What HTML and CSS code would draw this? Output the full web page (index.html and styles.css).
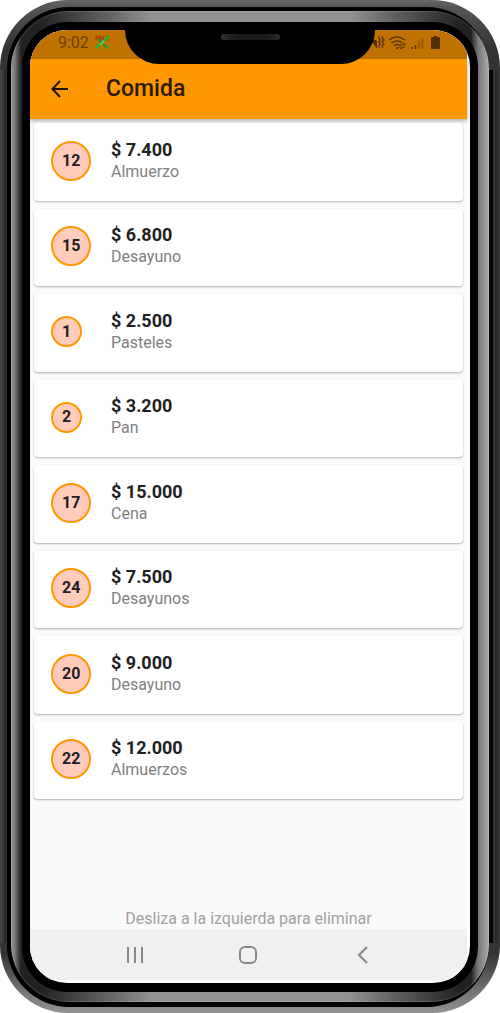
FILE: index.html
```html
<!DOCTYPE html>
<html lang="es">
<head>
<meta charset="utf-8">
<meta name="viewport" content="width=device-width, initial-scale=1">
<title>Comida</title>
<link rel="stylesheet" href="styles.css">
</head>
<body>
<div class="phone">
<div class="groove">
<div class="metal">
<div class="bezel">
<div class="glass">
<div class="notch"><span class="speaker"></span></div>
<div class="screen">
  <div class="status">
    <span class="clock">9:02</span>
    <svg class="gps" width="16" height="16" viewBox="0 0 16 16" aria-hidden="true">
      <path d="M1 1h2M1 1v4M1 3h2M4 5V1h2v4M4 3h2M8 1v4M10 1L8 3l2 2M14 1h-2v4h2" stroke="#a8321c" fill="none"/>
      <path d="M3 4l9 9" stroke="#189428" stroke-width="2"/>
      <path d="M1 13l4-4M9 6l5-5" stroke="#24b030" stroke-width="3"/>
      <path d="M5 10l4-4" stroke="#5fd060" stroke-width="2"/>
      <path d="M10 15q5 0 5-5M10 13q3 0 3-3" stroke="#6a9420" fill="none"/>
    </svg>
    <svg class="signals" width="72" height="16" viewBox="0 0 72 16" aria-hidden="true">
      <path d="M2 3l5 3v8L1 5z" fill="#4e2f00"/>
      <path d="M9.500 1l-1 2 2 2-2 2 2 2-2 2 1 2M13 1l-1 2 2 2-2 2 2 2-2 2 1 2" fill="none" stroke="#5c3800" stroke-width="1.300"/>
      <path d="M19 5q8-6 16 0M21.500 8q5.500-4 11 0M24 10.500q3-2 6 0" fill="none" stroke="#5c3800" stroke-width="1.500"/>
      <circle cx="27" cy="13" r="1.200" fill="#5c3800"/>
      <path d="M31 9v5m-2-2l2 2 2-2M34 13V8m-2 2l2-2 2 2" fill="none" stroke="#5c3800"/>
      <path d="M42 12v2M45.500 10v4" stroke="#5c3800" stroke-width="1.500"/>
      <path d="M49 6v8M52.500 3v11" stroke="#8e5700" stroke-width="1.500"/>
      <path d="M64 1h3v1h2q1 0 1 1v10q0 1-1 1h-7q-1 0-1-1V3q0-1 1-1h2z" fill="#4e2f00"/>
    </svg>
  </div>
  <header class="bar">
    <button class="back" type="button" aria-label="Volver">
      <svg width="18" height="18" viewBox="0 0 18 18" aria-hidden="true"><path d="M17 9H2M9 1L1.500 9 9 17" fill="none" stroke="#1f1300" stroke-width="2"/></svg>
    </button>
    <h1>Comida</h1>
  </header>
  <main>
    <ul class="list">
      <li class="card"><div class="lead"><span class="day">12</span></div><div><p class="amount">$ 7.400</p><p class="name">Almuerzo</p></div></li>
      <li class="card"><div class="lead"><span class="day">15</span></div><div><p class="amount">$ 6.800</p><p class="name">Desayuno</p></div></li>
      <li class="card"><div class="lead"><span class="day">1</span></div><div><p class="amount">$ 2.500</p><p class="name">Pasteles</p></div></li>
      <li class="card"><div class="lead"><span class="day">2</span></div><div><p class="amount">$ 3.200</p><p class="name">Pan</p></div></li>
      <li class="card"><div class="lead"><span class="day">17</span></div><div><p class="amount">$ 15.000</p><p class="name">Cena</p></div></li>
      <li class="card"><div class="lead"><span class="day">24</span></div><div><p class="amount">$ 7.500</p><p class="name">Desayunos</p></div></li>
      <li class="card"><div class="lead"><span class="day">20</span></div><div><p class="amount">$ 9.000</p><p class="name">Desayuno</p></div></li>
      <li class="card"><div class="lead"><span class="day">22</span></div><div><p class="amount">$ 12.000</p><p class="name">Almuerzos</p></div></li>
    </ul>
    <p class="hint">Desliza a la izquierda para eliminar</p>
  </main>
  <nav class="keys">
    <button type="button" aria-label="Recientes"><svg width="18" height="18" viewBox="0 0 18 18" aria-hidden="true"><path d="M2 1v16M9 1v16M16 1v16" stroke="#888" stroke-width="2"/></svg></button>
    <button type="button" aria-label="Inicio"><svg width="18" height="18" viewBox="0 0 18 18" aria-hidden="true"><rect x="1" y="1" width="16" height="16" rx="5" fill="none" stroke="#888" stroke-width="2"/></svg></button>
    <button type="button" aria-label="Atrás"><svg width="18" height="18" viewBox="0 0 18 18" aria-hidden="true"><path d="M14 1L6 9l8 8" fill="none" stroke="#888" stroke-width="2"/></svg></button>
  </nav>
</div>
</div>
</div>
</div>
</div>
</div>
</body>
</html>
```
FILE: styles.css
```css
* { box-sizing: border-box; }
html { background: #fff; }
body, h1, p, ul { margin: 0; padding: 0; }
body { font-family: Roboto, "Liberation Sans", sans-serif; color: #212121; }
button { border: 0; padding: 0; background: none; display: flex; }
svg { display: block; }

.phone {
  min-height: 100vh;
  display: flex;
  padding: 7px 11px 6px 7px;
  border-radius: 68px;
  background:
    linear-gradient(90deg, #484848, #333 4px, #222 6px, #444 7px) left center / 7px calc(100% - 140px) no-repeat,
    linear-gradient(270deg, #3a3a3a, #222 5px, #555 6px, #000 7px) right center / 11px calc(100% - 140px) no-repeat,
    linear-gradient(#666, #555 7px, #333 50px, #333 calc(100% - 60px), #777 calc(100% - 20px), #949294);
}
.groove {
  flex: 1;
  display: flex;
  padding: 4px 0 5px 4px;
  border-radius: 62px;
  background: #000;
}
.metal {
  flex: 1;
  display: flex;
  padding: 11px 11px 10px;
  border-radius: 58px;
  background: linear-gradient(90deg, #999, #777 4px, #222 10px, #222 30px, #666 100px, #929292 140px, #929292 calc(100% - 140px), #666 calc(100% - 100px), #222 calc(100% - 30px), #222 calc(100% - 18px), #777 calc(100% - 11px), #aaa);
  box-shadow: inset 0 0 0 1px rgba(255, 255, 255, .15);
}
.bezel {
  flex: 1;
  display: flex;
  padding: 8px 8px 9px;
  border-radius: 45px;
  background: #000;
}
.glass {
  position: relative;
  flex: 1;
  display: flex;
  padding: 0 3px 3px 0;
  border-radius: 37px;
  overflow: hidden;
  background: #fff;
}
.notch {
  position: absolute;
  z-index: 2;
  top: 0;
  left: 50%;
  width: 250px;
  height: 34px;
  margin-left: -125px;
  padding-top: 4px;
  border-radius: 0 0 34px 34px;
  background: #000;
}
.speaker {
  display: block;
  width: 59px;
  height: 6px;
  margin: 0 auto;
  border-radius: 3px;
  background: linear-gradient(90deg, #333, #1a1a1a 14px, #1a1a1a 46px, #2c2c2c);
}
.screen { flex: 1; display: flex; flex-direction: column; background: #fafafa; }
.status {
  display: flex;
  align-items: center;
  height: 29px;
  padding: 0 25px 4px 28px;
  background: #bf7200;
}
.clock { font-size: 16px; line-height: 24px; color: #6b4000; }
.gps { margin-left: 6px; }
.signals { margin-left: auto; }
.bar {
  display: flex;
  align-items: center;
  gap: 37px;
  height: 60px;
  padding-left: 21px;
  background: #ff9800;
  box-shadow: 0 2px 4px rgba(0, 0, 0, .3);
}
.bar h1 { font-size: 23px; line-height: 28px; font-weight: 500; color: #2b1a00; }
main { flex: 1; display: flex; flex-direction: column; padding: 4px 4px 0; }
.list { flex: 1; display: flex; flex-direction: column; gap: 8px; list-style: none; }
.card {
  flex: 1;
  display: flex;
  align-items: center;
  padding: 0 17px 2px;
  border-radius: 4px;
  background: #fff;
  box-shadow: 0 1px 2px rgba(0, 0, 0, .3);
}
.lead { width: 60px; }
.day {
  display: grid;
  place-items: center;
  width: max-content;
  aspect-ratio: 1;
  padding: 0 9px;
  border: 2px solid #ff9800;
  border-radius: 50%;
  background: #ffccbc;
  font-size: 16px;
  line-height: 20px;
  font-weight: 700;
}
.amount { font-size: 18px; line-height: 22px; font-weight: 700; }
.name { font-size: 16px; line-height: 22px; color: #808080; }
.hint { padding-top: 109px; font-size: 16px; line-height: 21px; text-align: center; color: #a0a0a0; }
.keys {
  display: flex;
  justify-content: space-around;
  align-items: center;
  height: 51px;
  padding: 0 48px;
  background: #f0f0f0;
}
```
